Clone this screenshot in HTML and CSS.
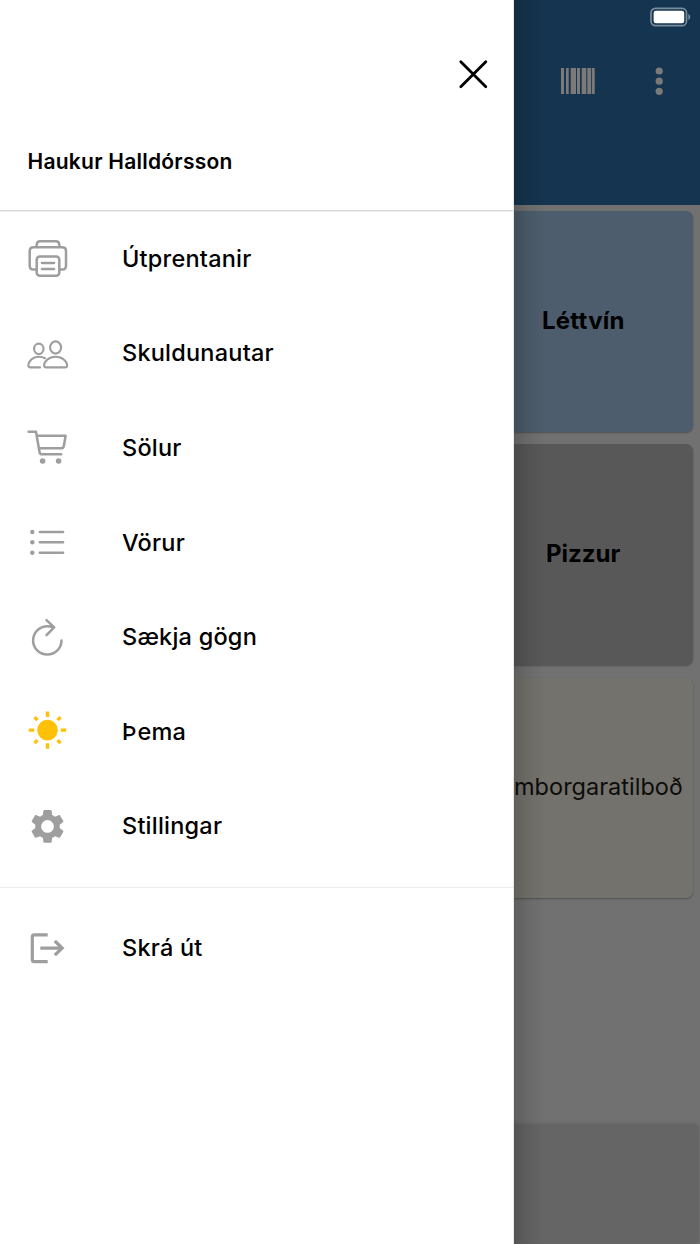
FILE: index.html
```html
<!DOCTYPE html>
<html lang="is">
<head>
<meta charset="utf-8">
<title>Valmynd</title>
<link rel="stylesheet" href="styles.css">
</head>
<body>
<div class="screen">
  <aside class="drawer">
    <header class="drawer-header">
      <button class="close" aria-label="Loka"><svg width="30" height="30" viewBox="0 0 30 30"><path d="M2.800 2.800l25 25M27.800 2.800l-25 25"/></svg></button>
      <div class="user">Haukur Halldórsson</div>
    </header>
    <nav class="menu">
      <a class="item"><svg class="icon" viewBox="-0.500 -0.500 48 48"><path d="M13 35h-3q-3.8 0-3.8-3.8V16.500q0-3.800 3.800-3.800h28.700q3.800 0 3.800 3.800v14.700q0 3.800-3.800 3.800H36M13.200 12.700v-2.500q0-3.500 3.500-3.500h15.600q3.500 0 3.500 3.500v2.500M18.500 28.500h12M18.500 34.500h12"/><rect x="13.200" y="22" width="22.600" height="19.300" rx="3"/></svg><span>Útprentanir</span></a>
      <a class="item"><svg class="icon thin" viewBox="-0.500 -0.500 48 48"><ellipse cx="15.300" cy="19.300" rx="4.700" ry="5.200"/><ellipse cx="32.100" cy="18" rx="5.500" ry="6.100"/><path d="M21.500 28.700c-1.800-.9-3.800-1.400-6-1.400-6.300 0-10.600 4.300-10.600 8.700 0 1.300.7 1.900 2 1.900h9.700M32.100 27.300c-7.200 0-11.500 4.800-11.500 8.700 0 1.300.8 1.900 2.200 1.900h18.600c1.500 0 2.200-.6 2.200-1.900 0-3.900-4.300-8.700-11.500-8.700z"/></svg><span>Skuldunautar</span></a>
      <a class="item"><svg class="icon" viewBox="-0.300 0 48 48"><path d="M5.300 8.800h7.400l3.500 20.200q.4 2.300 2.600 2.300h19.100M13.600 12.700h28.700l-1.700 10q-.4 2.600-3 2.600H15.500"/><circle class="solid" cx="19.300" cy="38" r="2.800"/><circle class="solid" cx="35.300" cy="38" r="2.800"/></svg><span>Sölur</span></a>
      <a class="item"><svg class="icon" viewBox="-0.300 -0.300 48 48"><path d="M16.500 13.700h23.300M16.500 24h23.300M16.500 34.400h23.300"/><g class="solid"><circle cx="9" cy="13.700" r="2.200"/><circle cx="9" cy="24" r="2.200"/><circle cx="9" cy="34.400" r="2.200"/></g></svg><span>Vörur</span></a>
      <a class="item"><svg class="icon" viewBox="0 -0.400 48 48"><path d="M38.500 27a14.200 14.200 0 1 1-14.200-14.200q3 0 6.700 1.300M23.500 6.800l7.700 7.200-7.700 7.700"/></svg><span>Sækja gögn</span></a>
      <a class="item"><svg class="icon sun" viewBox="-0.200 0.300 48 48"><circle cx="24.300" cy="23.400" r="10.300"/><path d="M24.300 4.700v5.500M24.300 36.600v5.500M5.600 23.400h5.500M37.500 23.400H43M11.300 10.400l3 3M34.300 33.400l3 3M11.300 36.400l3-3M34.300 13.400l3-3"/></svg><span>Þema</span></a>
      <a class="item"><svg class="icon gear" viewBox="-0.200 -0.400 48 48"><path transform="translate(4.700 4.400) scale(1.635)" d="M19.430 12.980c.04-.32.070-.64.070-.98s-.03-.66-.07-.98l2.110-1.650c.19-.15.240-.42.120-.64l-2-3.460c-.12-.22-.39-.3-.61-.22l-2.490 1c-.52-.4-1.080-.73-1.690-.98l-.38-2.650C14.460 2.180 14.250 2 14 2h-4c-.25 0-.46.180-.49.420l-.38 2.650c-.61.250-1.170.590-1.690.98l-2.490-1c-.23-.09-.49 0-.61.220l-2 3.460c-.13.220-.07.490.12.640l2.110 1.650c-.04.320-.07.650-.07.980s.03.660.070.980l-2.110 1.650c-.19.150-.24.420-.12.640l2 3.460c.12.220.39.300.61.220l2.490-1c.52.400 1.080.730 1.690.980l.38 2.650c.03.240.240.420.490.420h4c.25 0 .46-.18.490-.42l.38-2.650c.61-.25 1.170-.59 1.690-.98l2.490 1c.23.090.49 0 .61-.22l2-3.460c.12-.22.070-.49-.12-.64zM12 15.900A3.900 3.900 0 1 1 12 8.100a3.900 3.900 0 0 1 0 7.800z"/></svg><span>Stillingar</span></a>
    </nav>
    <a class="item logout"><svg class="icon exit" viewBox="0 0 48 48"><path d="M24.700 10.900H11.300q-2 0-2 2v22.800q0 2 2 2h13.400M17.300 24.100H39M31.800 17l7.400 7.100-7.400 7.100"/></svg><span>Skrá út</span></a>
  </aside>
  <main class="behind">
    <header class="appbar">
      <svg class="battery" width="42" height="20" viewBox="0 0 42 20"><rect x="1" y="1.300" width="35.500" height="17.400" rx="4.500"/><rect class="level" x="3.600" y="3.800" width="30.600" height="12.400" rx="2.300"/><path d="M38.500 6.800q3.400 3.200 0 6.400z"/></svg>
      <div class="actions">
        <svg width="34" height="26" viewBox="0 0 34 26"><path d="M0 0h3v26H0zM5 0h2.700v26H5zM9.700 0h5.300v26H9.700zM16 0h3v26h-3zM20.700 0h4.600v26h-4.600zM26.300 0h3.700v26h-3.700zM30.800 0h2.900v26h-2.900z"/></svg>
        <svg width="8" height="28" viewBox="0 0 8 28"><circle cx="4.200" cy="4" r="3.600"/><circle cx="4.200" cy="14.200" r="3.600"/><circle cx="4.200" cy="24.300" r="3.600"/></svg>
      </div>
    </header>
    <section class="tiles">
      <div class="tile blue">Léttvín</div>
      <div class="tile gray">Pizzur</div>
      <div class="tile cream">mborgaratilboð</div>
    </section>
    <footer class="bottom"></footer>
  </main>
</div>
</body>
</html>
```
FILE: styles.css
```css
* { box-sizing: border-box; }
body { margin: 0; font-family: Inter, "Noto Sans", sans-serif; color: #000; }
.screen { display: flex; width: 700px; height: 1244px; overflow: hidden; background: #717171; }
.drawer { width: 514px; flex: none; background: #fff; border-right: 1px solid #e6e8ea; }
.drawer-header { height: 211px; border-bottom: 1px solid #d8d8d8; box-shadow: 0 1px #f0f0f0; padding: 59px 25px 0 27.500px; display: flex; flex-direction: column; }
.close { display: flex; align-self: flex-end; border: 0; padding: 0; background: none; }
.close path { fill: none; stroke: #000; stroke-width: 2.800; stroke-linecap: round; }
.user { margin-top: 59px; font-size: 21px; line-height: 28px; font-weight: 600; letter-spacing: 0.250px; white-space: nowrap; }
.menu { height: 677px; border-bottom: 1px solid #ebebeb; }
.item { display: flex; align-items: center; height: 94.600px; padding-left: 23px; gap: 51px; font-size: 23.500px; font-weight: 500; letter-spacing: 0.220px; white-space: nowrap; }
.logout { margin-top: 12.400px; }
.icon { width: 48px; height: 48px; flex: none; fill: none; stroke: #9e9e9e; stroke-width: 2.500; stroke-linecap: round; stroke-linejoin: round; }
.thin { stroke-width: 2.100; }
.icon .solid { fill: #9e9e9e; stroke: none; }
.sun { stroke: #ffc107; stroke-width: 3.400; stroke-linecap: butt; }
.sun circle { fill: #ffc107; stroke: none; }
.gear { fill: #9e9e9e; stroke: none; }
.exit { stroke-width: 3.200; stroke-linecap: butt; stroke-linejoin: miter; }
.behind { position: relative; width: 186px; height: 1244px; display: flex; flex-direction: column; overflow: hidden; }
.behind::after { content: ""; position: absolute; inset: 0 auto 0 0; width: 32px; background: linear-gradient(90deg, rgba(0,0,0,.17), rgba(0,0,0,.06) 50%, transparent); }
.appbar { height: 205px; flex: none; background: #15344f; display: flex; flex-direction: column; padding-top: 7px; }
.battery { align-self: flex-end; margin-right: 8.500px; fill: #8b9bab; }
.battery rect { fill: none; stroke: #788b9b; stroke-width: 1.700; }
.battery .level { fill: #fff; stroke: none; }
.actions { display: flex; align-items: center; justify-content: space-between; margin: 40px 37px 0 47px; fill: #7c7a78; }
.tiles { display: flex; flex-direction: column; gap: 12.700px; padding: 6.400px 7px 0 0; }
.tile { height: 220.400px; border-radius: 0 7px 7px 0; display: flex; align-items: center; padding-bottom: 2px; font-size: 24px; font-weight: 700; letter-spacing: 0.250px; box-shadow: 0 1px 2px rgba(0,0,0,.3); }
.blue { background: #4d5d6d; padding-left: 28px; }
.gray { background: #585858; padding-left: 32px; letter-spacing: 0; }
.cream { background: #74726c; font-size: 23.500px; font-weight: 400; letter-spacing: 0.020px; color: #0c0c0b; }
.bottom { margin-top: auto; height: 120px; margin-right: 1px; background: #656565; border-radius: 0 5px 5px 0; box-shadow: 0 0 4px #656565; }
```
